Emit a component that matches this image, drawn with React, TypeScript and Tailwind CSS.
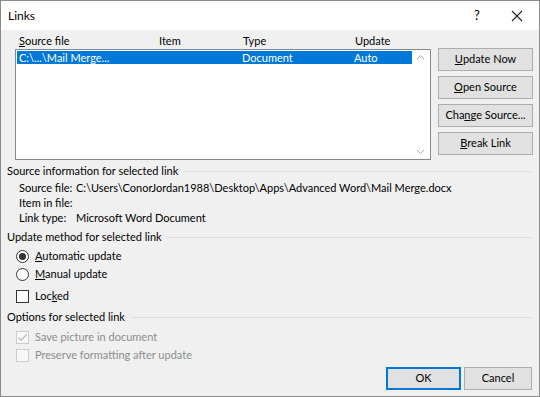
import React from "react";

const font = { fontFamily: 'Lato, "Noto Sans", sans-serif' };

function Btn({ children, def }: { children: React.ReactNode; def?: boolean }) {
  return (
    <div
      className={
        "flex-1 flex items-center justify-center bg-[#e1e1e1] text-black whitespace-nowrap " +
        (def ? "border-2 border-[#0078d7]" : "border border-[#adadad]")
      }
    >
      {children}
    </div>
  );
}

function Heading({ text }: { text: string }) {
  return (
    <div className="flex items-center h-[20px] pl-[6px] pr-[8px] whitespace-nowrap">
      <span className="text-black">{text}</span>
      <div className="flex-1 h-px bg-[#dcdcdc] ml-[6px]" />
    </div>
  );
}

function Radio({ checked, children }: { checked?: boolean; children: React.ReactNode }) {
  return (
    <div className="flex items-center h-[18px] pl-[15px] whitespace-nowrap">
      <div className="w-[13px] h-[13px] rounded-full border border-[#333] bg-white flex items-center justify-center">
        {checked && <div className="w-[7px] h-[7px] rounded-full bg-[#333]" />}
      </div>
      <span className="ml-[6px]">{children}</span>
    </div>
  );
}

function Check({ checked, disabled, children }: { checked?: boolean; disabled?: boolean; children: React.ReactNode }) {
  const c = disabled ? "#bcbcbc" : "#333";
  return (
    <div className="flex items-center h-[18px] pl-[15px] whitespace-nowrap">
      <div
        className={
          "w-[13px] h-[13px] border flex items-center justify-center " +
          (disabled ? "border-[#cccccc] bg-[#f7f7f7]" : "border-[#333] bg-white")
        }
      >
        {checked && (
          <svg width="11" height="11" viewBox="0 0 11 11">
            <path d="M1.5 5.5 L4.2 8.2 L9.5 2.5" fill="none" stroke={c} strokeWidth="1.3" />
          </svg>
        )}
      </div>
      <span className={"ml-[6px] " + (disabled ? "text-[#8d8d8d]" : "")}>{children}</span>
    </div>
  );
}

export default function App() {
  return (
    <div
      style={font}
      className="w-[540px] h-[397px] border border-[#8a8a8a] bg-[#f0f0f0] text-[11px] text-black flex flex-col overflow-hidden"
    >
      {/* Title bar */}
      <div className="h-[29px] bg-white flex items-center pl-[7px] shrink-0">
        <span className="flex-1 text-[12px]">Links</span>
        <span className="w-[14px] text-center text-[13px] mr-[27px]">?</span>
        <svg width="12" height="12" viewBox="0 0 12 12" className="mr-[16px]">
          <path d="M1 1 L11 11 M11 1 L1 11" stroke="#222" strokeWidth="1.1" />
        </svg>
      </div>

      {/* Column headers */}
      <div className="flex h-[19px] items-end pb-0 text-black shrink-0 whitespace-nowrap">
        <span className="ml-[18px] w-[140px]">
          <u>S</u>ource file
        </span>
        <span className="w-[84px]">Item</span>
        <span className="w-[112px]">Type</span>
        <span>Update</span>
      </div>

      {/* List + buttons */}
      <div className="flex h-[112px] shrink-0">
        <div className="ml-[14px] w-[416px] h-[111px] border border-[#828790] bg-white flex p-px">
          <div className="flex-1">
            <div className="h-[13px] bg-[#0078d7] text-white flex items-center leading-none whitespace-nowrap">
              <span className="ml-[2px] w-[223px]">C:\...\Mail Merge...</span>
              <span className="w-[112px]">Document</span>
              <span>Auto</span>
            </div>
          </div>
          <div className="w-[17px] flex flex-col justify-between items-center py-[3px]">
            <svg width="9" height="6" viewBox="0 0 9 6">
              <path d="M1 5 L4.5 1.5 L8 5" fill="none" stroke="#a8a8a8" strokeWidth="1" />
            </svg>
            <svg width="9" height="6" viewBox="0 0 9 6">
              <path d="M1 1 L4.5 4.5 L8 1" fill="none" stroke="#a8a8a8" strokeWidth="1" />
            </svg>
          </div>
        </div>
        <div className="ml-[7px] w-[95px] flex flex-col gap-[5px] -mt-px">
          <div className="h-[23px] flex">
            <Btn>
              <u>U</u>pdate Now
            </Btn>
          </div>
          <div className="h-[23px] flex">
            <Btn>
              <u>O</u>pen Source
            </Btn>
          </div>
          <div className="h-[23px] flex">
            <Btn>
              Cha<u>n</u>ge Source...
            </Btn>
          </div>
          <div className="h-[23px] flex">
            <Btn>
              <u>B</u>reak Link
            </Btn>
          </div>
        </div>
      </div>

      {/* Source information */}
      <Heading text="Source information for selected link" />
      <div className="flex flex-col pl-[18px] whitespace-nowrap">
        <div className="flex h-[15px] items-center">
          <span className="w-[57px] shrink-0">Source file:</span>
          <span>C:\Users\ConorJordan1988\Desktop\Apps\Advanced Word\Mail Merge.docx</span>
        </div>
        <div className="flex h-[15px] items-center">
          <span className="w-[57px] shrink-0">Item in file:</span>
        </div>
        <div className="flex h-[15px] items-center">
          <span className="w-[57px] shrink-0">Link type:</span>
          <span>Microsoft Word Document</span>
        </div>
      </div>

      {/* Update method */}
      <div className="mt-[1px]">
        <Heading text="Update method for selected link" />
      </div>
      <Radio checked>
        <u>A</u>utomatic update
      </Radio>
      <Radio>
        <u>M</u>anual update
      </Radio>
      <div className="mt-[4px]">
        <Check>
          Loc<u>k</u>ed
        </Check>
      </div>

      {/* Options */}
      <div className="mt-[2px]">
        <Heading text="Options for selected link" />
      </div>
      <div className="mt-[1px]">
        <Check checked disabled>
          Save picture in document
        </Check>
      </div>
      <Check disabled>Preserve formatting after update</Check>

      {/* Bottom buttons */}
      <div className="flex justify-end mt-[3px] pr-[7px] gap-[3px]">
        <div className="w-[75px] h-[23px] flex">
          <Btn def>OK</Btn>
        </div>
        <div className="w-[68px] h-[23px] flex">
          <Btn>Cancel</Btn>
        </div>
      </div>
    </div>
  );
}
